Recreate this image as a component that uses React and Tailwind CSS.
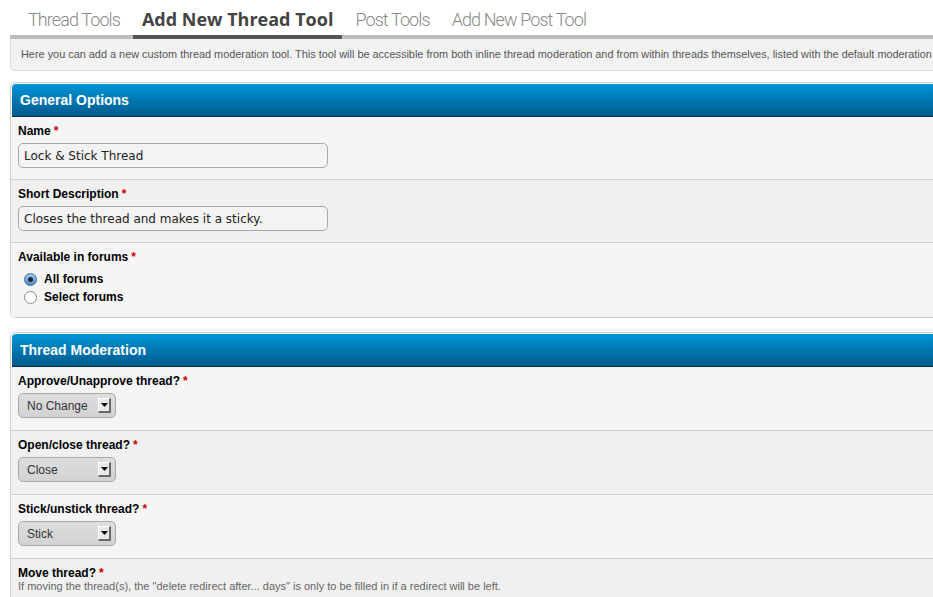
import React from "react";

const Req = () => <span className="text-[#cc0000] ml-[3px]">*</span>;

function Radio({ checked, label }) {
  return (
    <label className="flex items-center h-[18px] ml-[6px]">
      {checked ? (
        <span className="w-[13px] h-[13px] rounded-full border border-[#3b6a9a] bg-gradient-to-b from-[#a9c9ea] to-[#4d86c4] flex items-center justify-center">
          <span className="w-[5px] h-[5px] rounded-full bg-[#1d2a3a]" />
        </span>
      ) : (
        <span className="w-[13px] h-[13px] rounded-full border border-[#8a8a8a] bg-white" />
      )}
      <span className="ml-[7px] font-bold text-[12px] text-black">{label}</span>
    </label>
  );
}

function Select({ value }) {
  return (
    <div className="w-[98px] h-[25px] rounded-[5px] border border-[#a8a8a8] bg-gradient-to-b from-[#dedede] to-[#d2d2d2] flex items-center justify-between pl-[8px] pr-[4px]">
      <span className="text-[12px] text-[#333]">{value}</span>
      <span className="w-[13px] h-[15px] bg-[#e8e8e8] border-t border-l border-t-white border-l-white border-r-2 border-b-2 border-r-[#6a6a6a] border-b-[#6a6a6a] flex items-center justify-center">
        <svg width="7" height="4" viewBox="0 0 7 4"><path d="M0 0h7L3.5 4z" fill="#000" /></svg>
      </span>
    </div>
  );
}

function Row({ label, alt, children, desc, tall }) {
  return (
    <div className={`${alt ? "bg-[#f0f0f0]" : "bg-[#f5f5f5]"} border-b border-[#cfcfcf] pt-[7px] ${tall ? "pb-[12px]" : "pb-[11px]"} px-[7px]`}>
      <div className="font-bold text-[12px] leading-[14px] text-black">
        {label}
        <Req />
      </div>
      {desc && <div className="text-[11px] leading-[13px] text-[#666]">{desc}</div>}
      {children && <div className="mt-[5px]">{children}</div>}
    </div>
  );
}

function Panel({ title, children, className = "" }) {
  return (
    <div className={`border border-[#cccccc] rounded-tl-[5px] rounded-bl-[5px] bg-white pt-[1px] pl-[1px] overflow-hidden ${className}`}>
      <div className="h-[33px] rounded-tl-[4px] bg-gradient-to-b from-[#0094da] to-[#005b8c] border-b border-[#0e2f36] flex items-center pl-[8px]">
        <span className="text-white font-bold text-[14px]">{title}</span>
      </div>
      <div className="-ml-[1px]">{children}</div>
    </div>
  );
}

const inactiveFont = { fontFamily: 'Roboto, "Liberation Sans", sans-serif', fontWeight: 300, letterSpacing: "-0.9px" };

export default function App() {
  return (
    <div className="w-[933px] h-[597px] overflow-hidden bg-white" style={{ fontFamily: '"Liberation Sans", Arial, sans-serif' }}>
      <div className="w-[1010px] ml-[10px]">
        <div className="flex pl-[9px] border-b-4 border-[#bdbdbd] h-[39px] items-end">
          <div className="px-[9px] mr-[4px] h-[35px] pt-[3px] flex items-center text-[18px] text-[#8a8a8a]" style={inactiveFont}>Thread Tools</div>
          <div className="px-[9px] mr-[4px] h-[39px] -mb-[4px] pt-[3px] border-b-4 border-[#555] flex items-center text-[18px] font-bold text-[#444]" style={{ fontFamily: '"Open Sans", sans-serif' }}>Add New Thread Tool</div>
          <div className="px-[9px] mr-[4px] h-[35px] pt-[3px] flex items-center text-[18px] text-[#8a8a8a]" style={inactiveFont}>Post Tools</div>
          <div className="px-[9px] h-[35px] pt-[3px] flex items-center text-[18px] text-[#8a8a8a]" style={inactiveFont}>Add New Post Tool</div>
        </div>
        <div className="h-[32px] bg-[#f2f2f2] border border-t-0 border-[#dcdcdc] rounded-bl-[5px] flex items-center pl-[10px] text-[10.9px] text-[#555] whitespace-nowrap">
          Here you can add a new custom thread moderation tool. This tool will be accessible from both inline thread moderation and from within threads themselves, listed with the default moderation tools.
        </div>

        <Panel title="General Options" className="mt-[11px]">
          <Row label="Name">
            <div className="w-[310px] h-[25px] rounded-[5px] border border-[#a8a8a8] bg-[#f3f3f3] flex items-center pl-[5px] text-[12px] text-[#222]" style={{ fontFamily: '"DejaVu Sans", sans-serif' }}>
              Lock &amp; Stick Thread
            </div>
          </Row>
          <Row label="Short Description" alt>
            <div className="w-[310px] h-[25px] rounded-[5px] border border-[#a8a8a8] bg-[#f3f3f3] flex items-center pl-[5px] text-[12px] text-[#222]" style={{ fontFamily: '"DejaVu Sans", sans-serif' }}>
              Closes the thread and makes it a sticky.
            </div>
          </Row>
          <div className="bg-[#f5f5f5] pt-[7px] pb-[11px] px-[7px]">
            <div className="font-bold text-[12px] leading-[14px] text-black">
              Available in forums
              <Req />
            </div>
            <div className="mt-[6px]">
              <Radio checked label="All forums" />
              <Radio label="Select forums" />
            </div>
          </div>
        </Panel>

        <Panel title="Thread Moderation" className="mt-[14px]">
          <Row label="Approve/Unapprove thread?" tall>
            <Select value="No Change" />
          </Row>
          <Row label="Open/close thread?" alt tall>
            <Select value="Close" />
          </Row>
          <Row label="Stick/unstick thread?" tall>
            <Select value="Stick" />
          </Row>
          <Row label="Move thread?" alt desc={'If moving the thread(s), the "delete redirect after... days" is only to be filled in if a redirect will be left.'} />
        </Panel>
      </div>
    </div>
  );
}
